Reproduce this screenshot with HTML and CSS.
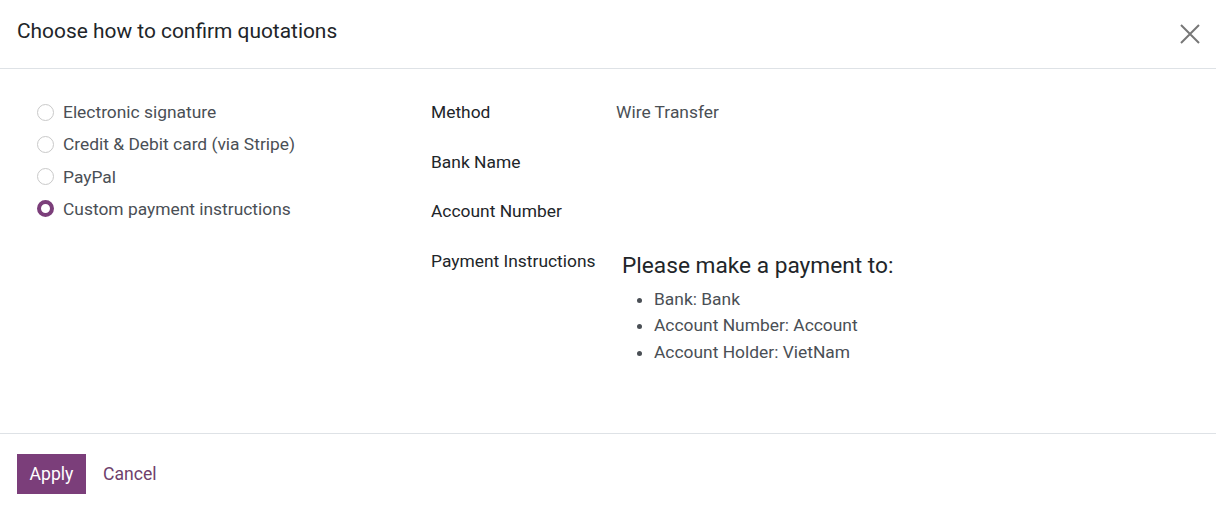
FILE: index.html
```html
<!DOCTYPE html>
<html>
<head>
<meta charset="utf-8">
<link rel="stylesheet" href="styles.css">
</head>
<body>
<div class="modal">
  <header class="modal-header">
    <h4 class="modal-title">Choose how to confirm quotations</h4>
    <button class="close" aria-label="Close">
      <svg width="20" height="20" viewBox="0 0 20 20"><path d="M1 1 L19 19 M19 1 L1 19" stroke="#777" stroke-width="2" fill="none"/></svg>
    </button>
  </header>
  <main class="modal-body">
    <div class="options">
      <label class="radio"><span class="circle"></span>Electronic signature</label>
      <label class="radio"><span class="circle"></span>Credit &amp; Debit card (via Stripe)</label>
      <label class="radio"><span class="circle"></span>PayPal</label>
      <label class="radio"><span class="circle checked"></span>Custom payment instructions</label>
    </div>
    <div class="fields">
      <div class="lbl">Method</div><div class="val">Wire Transfer</div>
      <div class="lbl">Bank Name</div><div class="val"></div>
      <div class="lbl">Account Number</div><div class="val"></div>
      <div class="lbl">Payment Instructions</div>
      <div class="val instr">
        <h3>Please make a payment to:</h3>
        <ul>
          <li>Bank: Bank</li>
          <li>Account Number: Account</li>
          <li>Account Holder: VietNam</li>
        </ul>
      </div>
    </div>
  </main>
  <footer class="modal-footer">
    <button class="btn primary">Apply</button>
    <button class="btn link">Cancel</button>
  </footer>
</div>
</body>
</html>
```

FILE: styles.css
```css
html, body { margin: 0; padding: 0; background: #fff; }
body { font-family: Roboto, "Noto Sans", sans-serif; color: #212529; font-size: 17.4px; }
.modal { width: 1216px; height: 508px; display: flex; flex-direction: column; }
.modal-header { height: 69px; box-sizing: border-box; border-bottom: 1px solid #dee2e6; display: flex; align-items: center; justify-content: space-between; padding: 0 16px 6px 17px; }
.modal-title { margin: 0; font-weight: 400; font-size: 20.9px; color: #212529; }
.close { background: none; border: 0; padding: 0; margin-top: 6px; width: 20px; height: 20px; cursor: pointer; }
.close svg { display: block; }
.modal-body { height: 364px; box-sizing: border-box; padding: 0 0 0 37px; display: flex; }
.options { width: 394px; padding-top: 33px; display: flex; flex-direction: column; gap: 12.3px; }
.radio { display: flex; align-items: center; height: 20px; color: #4a4f55; font-size: 17.4px; }
.circle { width: 15px; height: 15px; border: 1px solid #c9c9c9; border-radius: 50%; margin-right: 9px; box-sizing: content-box; }
.circle.checked { width: 9px; height: 9px; border: 4px solid #7b3e7a; background: #fff; }
.fields { display: grid; grid-template-columns: 185px 1fr; row-gap: 0; padding-top: 33px; align-content: start; }
.lbl { font-size: 17.4px; color: #212529; height: 49.5px; line-height: 20px; }
.val { font-size: 17.4px; color: #4a4f55; line-height: 20px; }
.instr { padding-left: 6px; }
.instr h3 { margin: 0; font-weight: 400; font-size: 22.7px; color: #212529; line-height: 26px; padding-top: 2px; }
.instr ul { margin: 7px 0 0; padding-left: 32px; }
.instr li { line-height: 26.5px; color: #4a4f55; }
.modal-footer { height: 75px; border-top: 1px solid #dee2e6; box-sizing: border-box; display: flex; align-items: flex-start; padding: 20px 17px 0; gap: 2px; }
.btn { font-family: inherit; font-size: 17.6px; border: 0; height: 40px; cursor: pointer; }
.btn.primary { background: #7b3e7a; color: #fff; width: 69px; padding: 0; }
.btn.link { background: none; color: #6f3f6c; padding: 0 15px; }
```
